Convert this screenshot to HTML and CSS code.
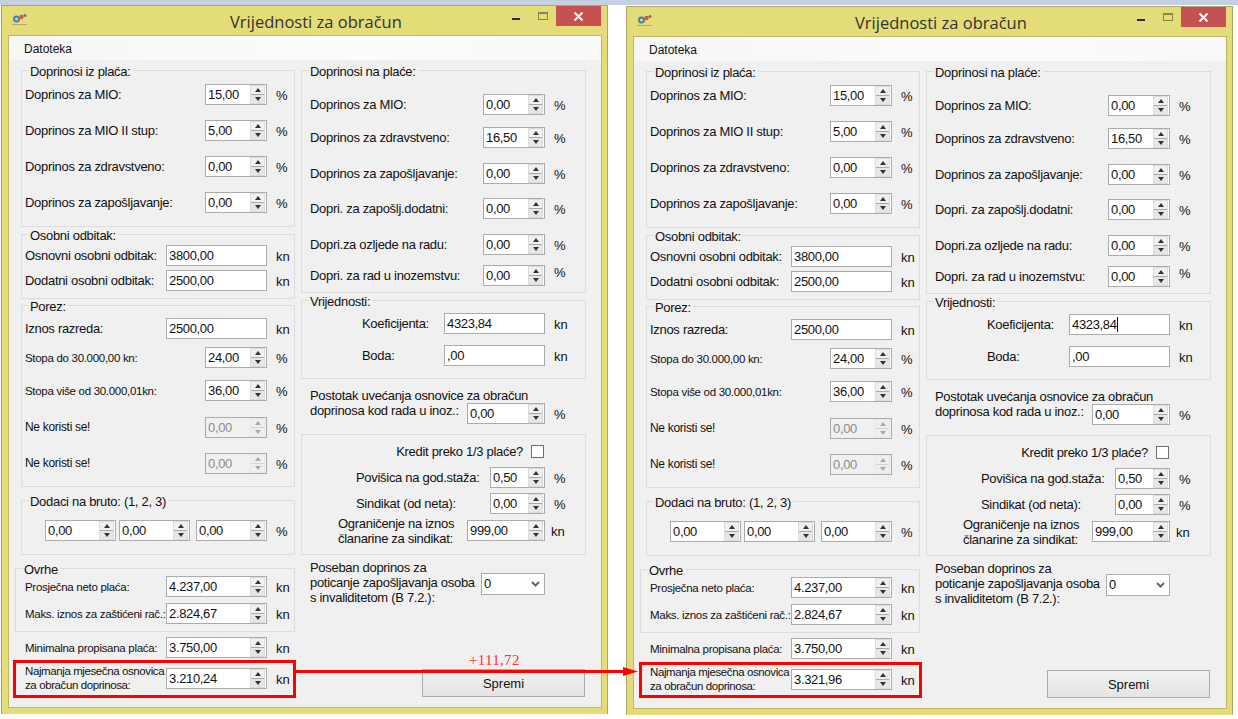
FILE: index.html
```html
<!DOCTYPE html>
<html lang="hr">
<head>
  <meta charset="UTF-8">
  <title>Vrijednosti za obračun</title>
  <link rel="stylesheet" href="styles.css">
</head>
<body>

  <div class="top-strip"></div>

  <!-- lijevi prozor -->
  <div class="window win-1">
    <div class="titlebar">
      <svg class="app-icon" width="18" height="14" viewBox="0 0 18 14">
        <circle cx="5.5" cy="6" r="2.5" fill="none" stroke="#4a7cb8" stroke-width="2"/>
        <circle cx="10.5" cy="4" r="2.2" fill="#d9583a"/>
        <circle cx="14" cy="2.5" r="1.5" fill="#5a76a4"/>
        <path d="M1 11.5h5" stroke="#a8a47c"/>
        <path d="M6 11.5h5" stroke="#d4a060"/>
        <path d="M11 11.5h5" stroke="#a8a47c"/>
      </svg>
      <div class="win-title">Vrijednosti za obračun</div>
      <div class="btn-min"></div>
      <div class="btn-max"></div>
      <div class="btn-close">
        <svg width="11" height="9" viewBox="0 0 11 9"><path d="M1.5 .5l8 8M9.5 .5l-8 8" stroke="#fff" stroke-width="2"/></svg>
      </div>
    </div>
    <div class="client">
      <div class="menubar"><span>Datoteka</span></div>
      <div class="form">
        <div class="col-l">
          <div class="group pb13">
            <div class="legend">Doprinosi iz plaća:</div>
            <div class="row mt13"><span class="lbl">Doprinos za MIO:</span><div class="spin w62"><span class="val">15,00</span><span class="btns"><b class="up"></b><b class="dn"></b></span></div><span class="unit">%</span></div>
            <div class="row mt15"><span class="lbl">Doprinos za MIO II stup:</span><div class="spin w62"><span class="val">5,00</span><span class="btns"><b class="up"></b><b class="dn"></b></span></div><span class="unit">%</span></div>
            <div class="row mt15"><span class="lbl">Doprinos za zdravstveno:</span><div class="spin w62"><span class="val">0,00</span><span class="btns"><b class="up"></b><b class="dn"></b></span></div><span class="unit">%</span></div>
            <div class="row mt15"><span class="lbl">Doprinos za zapošljavanje:</span><div class="spin w62"><span class="val">0,00</span><span class="btns"><b class="up"></b><b class="dn"></b></span></div><span class="unit">%</span></div>
          </div>
          <div class="group mt7 pb7">
            <div class="legend">Osobni odbitak:</div>
            <div class="row mt10"><span class="lbl">Osnovni osobni odbitak:</span><div class="text-field w101"><span class="val">3800,00</span></div><span class="unit">kn</span></div>
            <div class="row mt4"><span class="lbl">Dodatni osobni odbitak:</span><div class="text-field w101"><span class="val">2500,00</span></div><span class="unit">kn</span></div>
          </div>
          <div class="group mt6 pb12">
            <div class="legend">Porez:</div>
            <div class="row mt12"><span class="lbl">Iznos razreda:</span><div class="text-field w101"><span class="val">2500,00</span></div><span class="unit">kn</span></div>
            <div class="row mt8"><span class="lbl small">Stopa do 30.000,00 kn:</span><div class="spin w62"><span class="val">24,00</span><span class="btns"><b class="up"></b><b class="dn"></b></span></div><span class="unit">%</span></div>
            <div class="row mt12"><span class="lbl small">Stopa više od 30.000,01kn:</span><div class="spin w62"><span class="val">36,00</span><span class="btns"><b class="up"></b><b class="dn"></b></span></div><span class="unit">%</span></div>
            <div class="row mt16"><span class="lbl unused">Ne koristi se!</span><div class="spin w62 off"><span class="val">0,00</span><span class="btns"><b class="up"></b><b class="dn"></b></span></div><span class="unit">%</span></div>
            <div class="row mt15"><span class="lbl unused">Ne koristi se!</span><div class="spin w62 off"><span class="val">0,00</span><span class="btns"><b class="up"></b><b class="dn"></b></span></div><span class="unit">%</span></div>
          </div>
          <div class="group mt13 pb13">
            <div class="legend">Dodaci na bruto: (1, 2, 3)</div>
            <div class="row mt19 triple">
              <div class="spin w71"><span class="val">0,00</span><span class="btns"><b class="up"></b><b class="dn"></b></span></div>
              <div class="spin w71"><span class="val">0,00</span><span class="btns"><b class="up"></b><b class="dn"></b></span></div>
              <div class="spin w71 gap-more"><span class="val">0,00</span><span class="btns"><b class="up"></b><b class="dn"></b></span></div>
              <span class="unit">%</span>
            </div>
          </div>
          <div class="group group-wide mt13 pb7">
            <div class="legend">Ovrhe</div>
            <div class="row mt7"><span class="lbl cond">Prosječna neto plaća:</span><div class="spin w101"><span class="val">4.237,00</span><span class="btns"><b class="up"></b><b class="dn"></b></span></div><span class="unit">kn</span></div>
            <div class="row mt6"><span class="lbl cond">Maks. iznos za zaštićeni rač.:</span><div class="spin w101"><span class="val">2.824,67</span><span class="btns"><b class="up"></b><b class="dn"></b></span></div><span class="unit">kn</span></div>
          </div>
          <div class="row plain mt5"><span class="lbl cond">Minimalna propisana plaća:</span><div class="spin w101"><span class="val">3.750,00</span><span class="btns"><b class="up"></b><b class="dn"></b></span></div><span class="unit">kn</span></div>
          <div class="row plain mt10"><span class="lbl cond two-line">Najmanja mjesečna osnovica<br>za obračun doprinosa:</span><div class="spin w101"><span class="val">3.210,24</span><span class="btns"><b class="up"></b><b class="dn"></b></span></div><span class="unit">kn</span></div>
        </div>

        <div class="col-r">
          <div class="group pb6">
            <div class="legend">Doprinosi na plaće:</div>
            <div class="row mt23"><span class="lbl">Doprinos za MIO:</span><div class="spin w62"><span class="val">0,00</span><span class="btns"><b class="up"></b><b class="dn"></b></span></div><span class="unit">%</span></div>
            <div class="row mt12"><span class="lbl">Doprinos za zdravstveno:</span><div class="spin w62"><span class="val">16,50</span><span class="btns"><b class="up"></b><b class="dn"></b></span></div><span class="unit">%</span></div>
            <div class="row mt15"><span class="lbl">Doprinos za zapošljavanje:</span><div class="spin w62"><span class="val">0,00</span><span class="btns"><b class="up"></b><b class="dn"></b></span></div><span class="unit">%</span></div>
            <div class="row mt14"><span class="lbl">Dopri. za zapošlj.dodatni:</span><div class="spin w62"><span class="val">0,00</span><span class="btns"><b class="up"></b><b class="dn"></b></span></div><span class="unit">%</span></div>
            <div class="row mt15"><span class="lbl">Dopri.za ozljede na radu:</span><div class="spin w62"><span class="val">0,00</span><span class="btns"><b class="up"></b><b class="dn"></b></span></div><span class="unit">%</span></div>
            <div class="row mt10"><span class="lbl">Dopri. za rad u inozemstvu:</span><div class="spin w62"><span class="val">0,00</span><span class="btns"><b class="up"></b><b class="dn"></b></span></div><span class="unit unit-up">%</span></div>
          </div>
          <div class="group mt7 pb12">
            <div class="legend">Vrijednosti:</div>
            <div class="row mt12"><span class="lbl in60">Koeficijenta:</span><div class="text-field w101"><span class="val">4323,84</span></div><span class="unit">kn</span></div>
            <div class="row mt11"><span class="lbl in60">Boda:</span><div class="text-field w101"><span class="val">,00</span></div><span class="unit">kn</span></div>
          </div>
          <div class="row plain tall mt9"><span class="lbl two-line top">Postotak uvećanja osnovice za obračun<br>doprinosa kod rada u inoz.:</span><div class="spin w78 bottom"><span class="val">0,00</span><span class="btns"><b class="up"></b><b class="dn"></b></span></div><span class="unit bottom">%</span></div>
          <div class="group mt10 pb13">
            <div class="row check-row mt10"><span class="lbl end">Kredit preko 1/3 plaće?</span><span class="checkbox"></span></div>
            <div class="row mt9"><span class="lbl in54">Povišica na god.staža:</span><div class="spin w55"><span class="val">0,50</span><span class="btns"><b class="up"></b><b class="dn"></b></span></div><span class="unit">%</span></div>
            <div class="row mt5"><span class="lbl in54">Sindikat (od neta):</span><div class="spin w55"><span class="val">0,00</span><span class="btns"><b class="up"></b><b class="dn"></b></span></div><span class="unit">%</span></div>
            <div class="row mt6"><span class="lbl in36 two-line">Ograničenje na iznos<br>članarine za sindikat:</span><div class="spin w78"><span class="val">999,00</span><span class="btns"><b class="up"></b><b class="dn"></b></span></div><span class="unit near">kn</span></div>
          </div>
          <div class="row plain tall-3 mt5"><span class="lbl two-line">Poseban doprinos za<br>poticanje zapošljavanja osoba<br>s invaliditetom (B 7.2.):</span><div class="combo"><span class="val">0</span><svg width="9" height="6" viewBox="0 0 9 6"><path d="M1 1l3.5 3.5L8 1" fill="none" stroke="#666" stroke-width="2"/></svg></div><span class="unit"></span></div>
          <div class="save-btn">Spremi</div>
        </div>
      </div>
    </div>
  </div>

  <!-- desni prozor -->
  <div class="window win-2">
    <div class="titlebar">
      <svg class="app-icon" width="18" height="14" viewBox="0 0 18 14">
        <circle cx="5.5" cy="6" r="2.5" fill="none" stroke="#4a7cb8" stroke-width="2"/>
        <circle cx="10.5" cy="4" r="2.2" fill="#d9583a"/>
        <circle cx="14" cy="2.5" r="1.5" fill="#5a76a4"/>
        <path d="M1 11.5h5" stroke="#a8a47c"/>
        <path d="M6 11.5h5" stroke="#d4a060"/>
        <path d="M11 11.5h5" stroke="#a8a47c"/>
      </svg>
      <div class="win-title">Vrijednosti za obračun</div>
      <div class="btn-min"></div>
      <div class="btn-max"></div>
      <div class="btn-close">
        <svg width="11" height="9" viewBox="0 0 11 9"><path d="M1.5 .5l8 8M9.5 .5l-8 8" stroke="#fff" stroke-width="2"/></svg>
      </div>
    </div>
    <div class="client">
      <div class="menubar"><span>Datoteka</span></div>
      <div class="form">
        <div class="col-l">
          <div class="group pb13">
            <div class="legend">Doprinosi iz plaća:</div>
            <div class="row mt13"><span class="lbl">Doprinos za MIO:</span><div class="spin w62"><span class="val">15,00</span><span class="btns"><b class="up"></b><b class="dn"></b></span></div><span class="unit">%</span></div>
            <div class="row mt15"><span class="lbl">Doprinos za MIO II stup:</span><div class="spin w62"><span class="val">5,00</span><span class="btns"><b class="up"></b><b class="dn"></b></span></div><span class="unit">%</span></div>
            <div class="row mt15"><span class="lbl">Doprinos za zdravstveno:</span><div class="spin w62"><span class="val">0,00</span><span class="btns"><b class="up"></b><b class="dn"></b></span></div><span class="unit">%</span></div>
            <div class="row mt15"><span class="lbl">Doprinos za zapošljavanje:</span><div class="spin w62"><span class="val">0,00</span><span class="btns"><b class="up"></b><b class="dn"></b></span></div><span class="unit">%</span></div>
          </div>
          <div class="group mt7 pb7">
            <div class="legend">Osobni odbitak:</div>
            <div class="row mt10"><span class="lbl">Osnovni osobni odbitak:</span><div class="text-field w101"><span class="val">3800,00</span></div><span class="unit">kn</span></div>
            <div class="row mt4"><span class="lbl">Dodatni osobni odbitak:</span><div class="text-field w101"><span class="val">2500,00</span></div><span class="unit">kn</span></div>
          </div>
          <div class="group mt6 pb12">
            <div class="legend">Porez:</div>
            <div class="row mt12"><span class="lbl">Iznos razreda:</span><div class="text-field w101"><span class="val">2500,00</span></div><span class="unit">kn</span></div>
            <div class="row mt8"><span class="lbl small">Stopa do 30.000,00 kn:</span><div class="spin w62"><span class="val">24,00</span><span class="btns"><b class="up"></b><b class="dn"></b></span></div><span class="unit">%</span></div>
            <div class="row mt12"><span class="lbl small">Stopa više od 30.000,01kn:</span><div class="spin w62"><span class="val">36,00</span><span class="btns"><b class="up"></b><b class="dn"></b></span></div><span class="unit">%</span></div>
            <div class="row mt16"><span class="lbl unused">Ne koristi se!</span><div class="spin w62 off"><span class="val">0,00</span><span class="btns"><b class="up"></b><b class="dn"></b></span></div><span class="unit">%</span></div>
            <div class="row mt15"><span class="lbl unused">Ne koristi se!</span><div class="spin w62 off"><span class="val">0,00</span><span class="btns"><b class="up"></b><b class="dn"></b></span></div><span class="unit">%</span></div>
          </div>
          <div class="group mt13 pb13">
            <div class="legend">Dodaci na bruto: (1, 2, 3)</div>
            <div class="row mt19 triple">
              <div class="spin w71"><span class="val">0,00</span><span class="btns"><b class="up"></b><b class="dn"></b></span></div>
              <div class="spin w71"><span class="val">0,00</span><span class="btns"><b class="up"></b><b class="dn"></b></span></div>
              <div class="spin w71 gap-more"><span class="val">0,00</span><span class="btns"><b class="up"></b><b class="dn"></b></span></div>
              <span class="unit">%</span>
            </div>
          </div>
          <div class="group group-wide mt13 pb7">
            <div class="legend">Ovrhe</div>
            <div class="row mt7"><span class="lbl cond">Prosječna neto plaća:</span><div class="spin w101"><span class="val">4.237,00</span><span class="btns"><b class="up"></b><b class="dn"></b></span></div><span class="unit">kn</span></div>
            <div class="row mt6"><span class="lbl cond">Maks. iznos za zaštićeni rač.:</span><div class="spin w101"><span class="val">2.824,67</span><span class="btns"><b class="up"></b><b class="dn"></b></span></div><span class="unit">kn</span></div>
          </div>
          <div class="row plain mt5"><span class="lbl cond">Minimalna propisana plaća:</span><div class="spin w101"><span class="val">3.750,00</span><span class="btns"><b class="up"></b><b class="dn"></b></span></div><span class="unit">kn</span></div>
          <div class="row plain mt10"><span class="lbl cond two-line">Najmanja mjesečna osnovica<br>za obračun doprinosa:</span><div class="spin w101"><span class="val">3.321,96</span><span class="btns"><b class="up"></b><b class="dn"></b></span></div><span class="unit">kn</span></div>
        </div>

        <div class="col-r">
          <div class="group pb6">
            <div class="legend">Doprinosi na plaće:</div>
            <div class="row mt23"><span class="lbl">Doprinos za MIO:</span><div class="spin w62"><span class="val">0,00</span><span class="btns"><b class="up"></b><b class="dn"></b></span></div><span class="unit">%</span></div>
            <div class="row mt12"><span class="lbl">Doprinos za zdravstveno:</span><div class="spin w62"><span class="val">16,50</span><span class="btns"><b class="up"></b><b class="dn"></b></span></div><span class="unit">%</span></div>
            <div class="row mt15"><span class="lbl">Doprinos za zapošljavanje:</span><div class="spin w62"><span class="val">0,00</span><span class="btns"><b class="up"></b><b class="dn"></b></span></div><span class="unit">%</span></div>
            <div class="row mt14"><span class="lbl">Dopri. za zapošlj.dodatni:</span><div class="spin w62"><span class="val">0,00</span><span class="btns"><b class="up"></b><b class="dn"></b></span></div><span class="unit">%</span></div>
            <div class="row mt15"><span class="lbl">Dopri.za ozljede na radu:</span><div class="spin w62"><span class="val">0,00</span><span class="btns"><b class="up"></b><b class="dn"></b></span></div><span class="unit">%</span></div>
            <div class="row mt10"><span class="lbl">Dopri. za rad u inozemstvu:</span><div class="spin w62"><span class="val">0,00</span><span class="btns"><b class="up"></b><b class="dn"></b></span></div><span class="unit unit-up">%</span></div>
          </div>
          <div class="group mt7 pb12">
            <div class="legend">Vrijednosti:</div>
            <div class="row mt12"><span class="lbl in60">Koeficijenta:</span><div class="text-field w101"><span class="val caret">4323,84</span></div><span class="unit">kn</span></div>
            <div class="row mt11"><span class="lbl in60">Boda:</span><div class="text-field w101"><span class="val">,00</span></div><span class="unit">kn</span></div>
          </div>
          <div class="row plain tall mt9"><span class="lbl two-line top">Postotak uvećanja osnovice za obračun<br>doprinosa kod rada u inoz.:</span><div class="spin w78 bottom"><span class="val">0,00</span><span class="btns"><b class="up"></b><b class="dn"></b></span></div><span class="unit bottom">%</span></div>
          <div class="group mt10 pb13">
            <div class="row check-row mt10"><span class="lbl end">Kredit preko 1/3 plaće?</span><span class="checkbox"></span></div>
            <div class="row mt9"><span class="lbl in54">Povišica na god.staža:</span><div class="spin w55"><span class="val">0,50</span><span class="btns"><b class="up"></b><b class="dn"></b></span></div><span class="unit">%</span></div>
            <div class="row mt5"><span class="lbl in54">Sindikat (od neta):</span><div class="spin w55"><span class="val">0,00</span><span class="btns"><b class="up"></b><b class="dn"></b></span></div><span class="unit">%</span></div>
            <div class="row mt6"><span class="lbl in36 two-line">Ograničenje na iznos<br>članarine za sindikat:</span><div class="spin w78"><span class="val">999,00</span><span class="btns"><b class="up"></b><b class="dn"></b></span></div><span class="unit near">kn</span></div>
          </div>
          <div class="row plain tall-3 mt5"><span class="lbl two-line">Poseban doprinos za<br>poticanje zapošljavanja osoba<br>s invaliditetom (B 7.2.):</span><div class="combo"><span class="val">0</span><svg width="9" height="6" viewBox="0 0 9 6"><path d="M1 1l3.5 3.5L8 1" fill="none" stroke="#666" stroke-width="2"/></svg></div><span class="unit"></span></div>
          <div class="save-btn">Spremi</div>
        </div>
      </div>
    </div>
  </div>

  <!-- crvene oznake preko prozora -->
  <svg class="marks" width="1238" height="719" viewBox="0 0 1238 719">
    <rect x="14.5" y="661.5" width="280" height="35" fill="none" stroke="#f00" stroke-width="3"/>
    <rect x="640.5" y="663.5" width="280" height="33" fill="none" stroke="#f00" stroke-width="3"/>
    <path d="M295 671.5H625" stroke="#f00" stroke-width="3"/>
    <path d="M623 667L638 671.5L623 676Z" fill="#f00"/>
  </svg>
  <div class="diff">+111,72</div>

</body>
</html>
```

FILE: styles.css
```css
body {
  margin: 0;
  height: 719px;
  overflow: hidden;
  background: #fff;
  font-family: "Liberation Sans", sans-serif;
  font-size: 13px;
  letter-spacing: -0.3px;
  color: #111;
  position: relative;
}

.top-strip {
  height: 5px;
  background: #c5d0e1;
}

/* prozori */
.window {
  position: absolute;
  width: 605px;
  height: 708px;
  background: #e3dc78;
  border: 1px solid #aaa56a;
  border-bottom: none;
  display: flex;
  flex-direction: column;
}

.win-1 { left: 1px; top: 5px; }
.win-2 { left: 626px; top: 6px; }

.titlebar {
  height: 29px;
  flex: 0 0 auto;
  position: relative;
}

.app-icon {
  display: block;
  margin: 7px 0 0 9px;
}

.win-title {
  position: absolute;
  left: 228px;
  top: 5px;
  font-family: "Open Sans", sans-serif;
  font-size: 16.5px;
  line-height: 22px;
  letter-spacing: 0;
  color: #333;
}

.btn-min {
  position: absolute;
  left: 510px;
  top: 12px;
  width: 8px;
  height: 2px;
  background: #2b2b2b;
}

.btn-max {
  position: absolute;
  left: 536px;
  top: 6px;
  width: 8px;
  height: 5px;
  border: 1px solid #87844f;
  border-top-width: 2px;
}

.btn-close {
  position: absolute;
  left: 554px;
  top: 0;
  width: 45px;
  height: 20px;
  background: #c75050;
  display: flex;
  align-items: center;
  justify-content: center;
}

.client {
  margin: 0 5px 0 6px;
  height: 671px;
  border: 1px solid #bfb95f;
  background: #f0f0f0;
  display: flex;
  flex-direction: column;
}

.menubar {
  height: 23px;
  padding: 1px 0 0 15px;
  flex: 0 0 auto;
  background: linear-gradient(to right, #f6f6f6, #fcfcfc 60%, #f8f8f8);
  display: flex;
  align-items: center;
  font-size: 12px;
  letter-spacing: 0;
}

.form {
  display: flex;
  gap: 6px;
  padding: 10px 0 0 12px;
}

.col-l { width: 274px; }
.col-r { width: 285px; }

/* razmaci, redovi su nepravilno slozeni */
.mt4 { margin-top: 4px; }
.mt5 { margin-top: 5px; }
.mt6 { margin-top: 6px; }
.mt7 { margin-top: 7px; }
.mt8 { margin-top: 8px; }
.mt9 { margin-top: 9px; }
.mt10 { margin-top: 10px; }
.mt11 { margin-top: 11px; }
.mt12 { margin-top: 12px; }
.mt13 { margin-top: 13px; }
.mt14 { margin-top: 14px; }
.mt15 { margin-top: 15px; }
.mt16 { margin-top: 16px; }
.mt19 { margin-top: 19px; }
.mt23 { margin-top: 23px; }
.pb6 { padding-bottom: 6px; }
.pb7 { padding-bottom: 7px; }
.pb12 { padding-bottom: 12px; }
.pb13 { padding-bottom: 13px; }

/* grupe */
.group {
  border: 1px solid #dcdcdc;
}

.group-wide {
  margin-left: -6px;
  padding-left: 6px;
}

.legend {
  width: fit-content;
  height: 14px;
  line-height: 14px;
  margin: -6px 0 -8px 7px;
  padding: 0 2px 0 1px;
  background: #f0f0f0;
}

.group-wide .legend { margin-left: 1px; }

/* redovi */
.row {
  display: flex;
  align-items: center;
  height: 21px;
}

.row.plain { padding: 0 1px; }
.row.tall { height: 36px; align-items: flex-start; }
.row.tall-3 { height: 45px; }
.row.check-row { height: 13px; }

.lbl {
  flex: 1 1 0;
  min-width: 0;
  white-space: nowrap;
}

.col-l .lbl { padding-left: 3px; }
.col-r .lbl { padding-left: 8px; }
.col-r .lbl.in60 { padding-left: 60px; }
.col-r .lbl.in54 { padding-left: 54px; }
.col-r .lbl.in36 { padding-left: 36px; }

.lbl.small,
.lbl.cond { font-size: 11.5px; }
.lbl.unused { font-size: 12px; position: relative; top: -1px; }
.lbl.two-line { line-height: 15px; }
.lbl.cond.two-line { line-height: 14px; letter-spacing: -0.4px; padding-bottom: 2px; }
.lbl.end { text-align: right; padding-right: 8px; }

.top { align-self: flex-start; }
.bottom { align-self: flex-end; }

.unit {
  flex: 0 0 auto;
  padding-left: 9px;
  box-sizing: border-box;
  letter-spacing: 0;
  position: relative;
  top: 1px;
}

.col-l .unit { width: 27px; }
.col-r .unit { width: 40px; }
.col-r .unit.near { padding-left: 6px; }
.unit.unit-up { top: -3px; }
.unit.bottom { line-height: 21px; }

.triple { justify-content: flex-end; gap: 3px; }
.triple .unit { margin-left: -3px; }
.gap-more { margin-left: 3px; }

/* polja */
.text-field,
.spin,
.combo {
  flex: 0 0 auto;
  height: 21px;
  box-sizing: border-box;
  border: 1px solid #ababab;
  background: #fff;
  display: flex;
  align-items: center;
  justify-content: space-between;
  letter-spacing: -0.35px;
}

.val { padding-left: 2px; color: #111; }
.val.caret { border-right: 1px solid #111; }

.w55 { width: 55px; }
.w62 { width: 62px; }
.w71 { width: 71px; }
.w78 { width: 78px; }
.w101 { width: 101px; }

.spin.off { background: #f0f0f0; }
.spin.off .val { color: #8c8c8c; }

.btns {
  width: 15px;
  height: 19px;
  display: flex;
  flex-direction: column;
  background: #dcdcdc;
  margin-right: 1px;
}

.btns b {
  flex: 1;
  margin: 0 1px;
  background: #f0f0f0;
  display: flex;
  align-items: center;
  justify-content: center;
}

.btns b.up { margin-top: 1px; border-bottom: 1px solid #a8a8a8; }
.btns b.dn { margin-bottom: 1px; background: #e6e6e6; }

.btns b::before {
  content: "";
  border-left: 3px solid transparent;
  border-right: 3px solid transparent;
}

.btns .up::before { border-bottom: 4px solid #333; }
.btns .dn::before { border-top: 4px solid #333; }

.off .btns { background: #e8e8e8; }
.off .btns b { background: #efefef; border-color: #d4d4d4; }
.off .btns .up::before { border-bottom-color: #a9a9a9; }
.off .btns .dn::before { border-top-color: #a9a9a9; }

.combo {
  width: 64px;
  height: 22px;
  padding-right: 4px;
  margin-top: 2px;
}

.checkbox {
  width: 13px;
  height: 13px;
  box-sizing: border-box;
  border: 1px solid #707070;
  background: #fff;
  margin-right: 41px;
}

.save-btn {
  width: 163px;
  height: 28px;
  box-sizing: border-box;
  padding-top: 1px;
  margin: 64px 1px 0 auto;
  border: 1px solid #acacac;
  background: linear-gradient(to bottom, #f0f0f0, #e5e5e5);
  letter-spacing: 0;
  display: flex;
  align-items: center;
  justify-content: center;
}

/* oznake */
.marks {
  position: absolute;
  left: 0;
  top: 0;
  pointer-events: none;
}

.diff {
  position: absolute;
  left: 469px;
  top: 651px;
  font-family: "Liberation Serif", serif;
  font-size: 15px;
  line-height: 18px;
  letter-spacing: 0.3px;
  color: #f33;
}
```
